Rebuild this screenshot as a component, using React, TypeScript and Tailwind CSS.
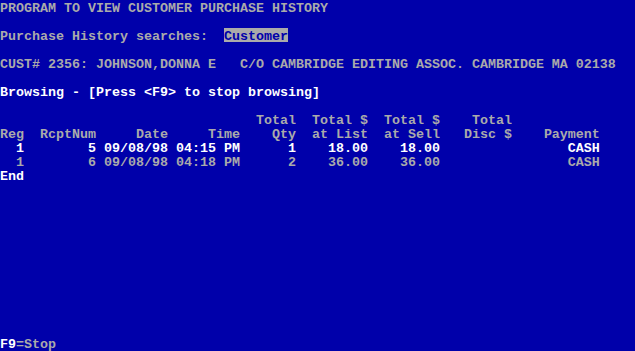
import React from "react";

const G = "text-[#AAAAAA]";
const W = "text-[#FFFFFF]";

function Seg({ children, className = "" }: { children: React.ReactNode; className?: string }) {
  return <span className={`block h-[14px] pt-[2px] leading-[14px] ${className}`}>{children}</span>;
}

function Line({ children, className = "" }: { children?: React.ReactNode; className?: string }) {
  return <div className={`flex h-[14px] whitespace-pre ${className}`}>{children ?? <Seg>{" "}</Seg>}</div>;
}

export default function App() {
  return (
    <div
      className="w-[635px] h-[351px] bg-[#0000AA] overflow-hidden flex flex-col text-[13.333px] font-bold"
      style={{ fontFamily: '"Liberation Mono", "DejaVu Sans Mono", monospace' }}
    >
      <Line><Seg className={G}>PROGRAM TO VIEW CUSTOMER PURCHASE HISTORY</Seg></Line>
      <Line />
      <Line>
        <Seg className={G}>{"Purchase History searches:  "}</Seg>
        <Seg className="bg-[#AAAAAA] text-[#0000AA]">Customer</Seg>
      </Line>
      <Line />
      <Line><Seg className={G}>CUST# 2356: JOHNSON,DONNA E   C/O CAMBRIDGE EDITING ASSOC. CAMBRIDGE MA 02138</Seg></Line>
      <Line />
      <Line><Seg className={W}>Browsing - [Press &lt;F9&gt; to stop browsing]</Seg></Line>
      <Line />
      <Line><Seg className={G}>{"                                Total  Total $  Total $    Total"}</Seg></Line>
      <Line><Seg className={G}>{"Reg  RcptNum     Date     Time    Qty  at List  at Sell   Disc $    Payment"}</Seg></Line>
      <Line><Seg className={W}>{"  1        5 09/08/98 04:15 PM      1    18.00    18.00                CASH"}</Seg></Line>
      <Line><Seg className={G}>{"  1        6 09/08/98 04:18 PM      2    36.00    36.00                CASH"}</Seg></Line>
      <Line><Seg className={W}>End</Seg></Line>
      <div className="flex-1" />
      <Line className="mb-[1px]">
        <Seg className={W}>F9</Seg>
        <Seg className={G}>=Stop</Seg>
      </Line>
    </div>
  );
}
